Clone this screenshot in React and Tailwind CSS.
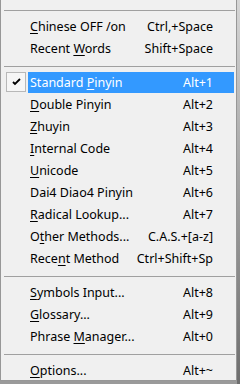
import React from 'react'

const groups = [
  [
    { pre: '', key: 'C', post: 'hinese OFF /on', sc: 'Ctrl,+Space' },
    { pre: 'Recent ', key: 'W', post: 'ords', sc: 'Shift+Space' },
  ],
  [
    { pre: 'Standard ', key: 'P', post: 'inyin', sc: 'Alt+1', active: true },
    { pre: '', key: 'D', post: 'ouble Pinyin', sc: 'Alt+2' },
    { pre: '', key: 'Z', post: 'huyin', sc: 'Alt+3' },
    { pre: '', key: 'I', post: 'nternal Code', sc: 'Alt+4' },
    { pre: '', key: 'U', post: 'nicode', sc: 'Alt+5' },
    { pre: 'Dai4 Diao4 Pinyin', key: '', post: '', sc: 'Alt+6' },
    { pre: '', key: 'R', post: 'adical Lookup...', sc: 'Alt+7' },
    { pre: 'O', key: 't', post: 'her Methods...', sc: 'C.A.S.+[a-z]' },
    { pre: 'Rece', key: 'n', post: 't Method', sc: 'Ctrl+Shift+Sp' },
  ],
  [
    { pre: '', key: 'S', post: 'ymbols Input...', sc: 'Alt+8' },
    { pre: '', key: 'G', post: 'lossary...', sc: 'Alt+9' },
    { pre: 'Phrase ', key: 'M', post: 'anager...', sc: 'Alt+0' },
  ],
  [{ pre: '', key: 'O', post: 'ptions...', sc: 'Alt+~' }],
]

function Separator() {
  return (
    <div className="h-[12px] pt-[6px] pl-[3px] pr-[1px]">
      <div className="w-full h-px bg-[#a0a0a0]" />
    </div>
  )
}

function Item({ item }) {
  return (
    <div className="h-[22px] pb-px flex">
      <div className="w-[27px] flex justify-center pl-[4px] pr-[1px]">
        {item.active && (
          <div className="w-[20px] h-[20px] border border-[#b8b8b8] bg-[#f6f6f6] flex items-center justify-center">
            <svg width="9" height="8" viewBox="0 0 9 8">
              <path d="M1 4 L3 6 L8 1" fill="none" stroke="#000" strokeWidth="1.8" />
            </svg>
          </div>
        )}
      </div>
      <div
        className={`flex-1 mr-[2px] pt-px flex items-center justify-between pl-[2px] pr-[21px] ${
          item.active ? 'bg-[#3399ff] text-white' : 'text-black'
        }`}
      >
        <span>
          {item.pre}
          {item.key && <span className="underline underline-offset-2">{item.key}</span>}
          {item.post}
        </span>
        <span>{item.sc}</span>
      </div>
    </div>
  )
}

export default function App() {
  return (
    <div className="w-[240px] h-[384px] bg-[#9a9a9a] flex overflow-hidden">
      <div
        className="w-[237px] h-[381px] shrink-0 overflow-hidden bg-[#f0f0f0] border-l border-r border-b border-[#979797] pt-[4px] text-[12.5px] leading-none"
        style={{ fontFamily: '"Noto Sans", "Open Sans", sans-serif' }}
      >
        {groups.map((g, i) => (
          <div key={i}>
            <Separator />
            {g.map((item, j) => (
              <Item key={j} item={item} />
            ))}
          </div>
        ))}
      </div>
      <div className="flex-1 bg-gradient-to-b from-[#d6d6d6] to-[#6e6e6e]" />
    </div>
  )
}
